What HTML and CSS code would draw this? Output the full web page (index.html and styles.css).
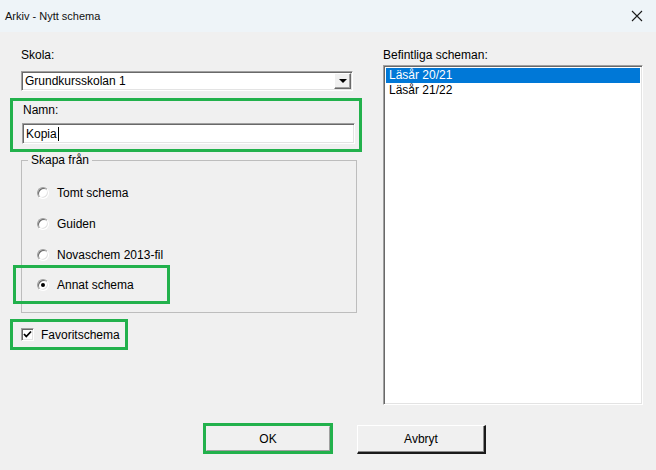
FILE: index.html
```html
<!DOCTYPE html>
<html lang="sv">
<head>
    <meta charset="UTF-8">
    <title>Arkiv - Nytt schema</title>
    <link rel="stylesheet" href="styles.css">
</head>
<body>
    <div class="titlebar">
        <span class="title">Arkiv - Nytt schema</span>
        <svg class="close" width="12" height="12" viewBox="0 0 12 12">
            <path d="M1 1 L11 11 M11 1 L1 11" stroke="#1a1a1a" stroke-width="1.1" fill="none"/>
        </svg>
    </div>

    <div class="content">
        <div class="columns">
            <div class="left">
                <div class="lbl">Skola:</div>
                <div class="combo">
                    <span class="combo-text">Grundkursskolan 1</span>
                    <span class="drop"><span class="arrow"></span></span>
                </div>

                <div class="mark mark-namn">
                    <div class="lbl namn-lbl">Namn:</div>
                    <div class="textbox">Kopia<span class="caret"></span></div>
                </div>

                <div class="group">
                    <div class="group-title">Skapa från</div>
                    <div class="radio first"><span class="circle"></span>Tomt schema</div>
                    <div class="radio"><span class="circle"></span>Guiden</div>
                    <div class="radio"><span class="circle"></span>Novaschem 2013-fil</div>
                    <div class="mark mark-radio"><span class="circle checked"></span>Annat schema</div>
                </div>

                <div class="mark mark-check">
                    <span class="checkbox">
                        <svg width="9" height="9" viewBox="0 0 9 9">
                            <path d="M1 4 L3.3 6.5 L8 1.5" stroke="#000" stroke-width="1.8" fill="none"/>
                        </svg>
                    </span>
                    Favoritschema
                </div>
            </div>

            <div class="right">
                <div class="lbl">Befintliga scheman:</div>
                <div class="listbox">
                    <div class="item selected">Läsår 20/21</div>
                    <div class="item">Läsår 21/22</div>
                </div>
            </div>
        </div>

        <div class="buttons">
            <div class="mark mark-ok"><button class="btn btn-ok">OK</button></div>
            <button class="btn btn-cancel">Avbryt</button>
        </div>
    </div>
</body>
</html>
```

FILE: styles.css
```css
body {
    margin: 0;
    background: #f0f0f0;
    font-family: "Liberation Sans", Arial, sans-serif;
    font-size: 12px;
    color: #000;
}
.titlebar {
    height: 32px;
    background: #eef4f8;
    display: flex;
    align-items: center;
    justify-content: space-between;
    padding: 0 13px 0 5px;
}
.title {
    font-size: 11px;
    color: #111;
}
.content {
    padding: 16px 0 0 21px;
}
.columns {
    display: flex;
    align-items: flex-start;
}
.left {
    width: 336px;
    display: flex;
    flex-direction: column;
}
.right {
    margin-left: 26px;
    width: 260px;
}
.lbl {
    line-height: 14px;
    height: 14px;
}

/* green highlight frames */
.mark {
    border: 3px solid #22b14c;
    box-sizing: border-box;
}

/* sunken fields */
.combo,
.textbox,
.listbox {
    box-sizing: border-box;
    background: #fff;
    border: 1px solid;
    border-color: #a0a0a0 #fff #fff #a0a0a0;
    box-shadow: inset 1px 1px 0 #696969, inset -1px -1px 0 #e3e3e3;
}
.combo {
    margin-top: 9px;
    width: 332px;
    height: 20px;
    display: flex;
    align-items: center;
    justify-content: space-between;
    padding: 0 1px 0 3px;
}
.drop {
    width: 17px;
    height: 16px;
    box-sizing: border-box;
    background: #f0f0f0;
    border: 1px solid;
    border-color: #fff #696969 #696969 #fff;
    box-shadow: inset -1px -1px 0 #a0a0a0;
    display: flex;
    align-items: center;
    justify-content: center;
}
.arrow {
    width: 0;
    height: 0;
    border-left: 4px solid transparent;
    border-right: 4px solid transparent;
    border-top: 4px solid #000;
}

.mark-namn {
    margin: 7px -5px 0 -11px;
    padding: 2px 4px 5px 9px;
}
.namn-lbl {
    padding-left: 1px;
}
.textbox {
    margin-top: 6px;
    height: 21px;
    display: flex;
    align-items: center;
    padding-left: 3px;
}
.caret {
    display: inline-block;
    width: 1px;
    height: 14px;
    background: #000;
    margin-left: 1px;
}

.group {
    margin-top: 8px;
    border: 1px solid #bdbdbd;
    padding-bottom: 8px;
}
.group-title {
    width: max-content;
    margin: -8px 0 0 6px;
    padding: 0 3px;
    background: #f0f0f0;
    line-height: 14px;
}
.radio {
    display: flex;
    align-items: center;
    gap: 8px;
    height: 31px;
    padding-left: 15px;
}
.radio.first {
    margin-top: 10px;
}
.circle {
    width: 12px;
    height: 12px;
    box-sizing: border-box;
    border-radius: 50%;
    background: #fff;
    border: 1px solid;
    border-color: #a0a0a0 #fff #fff #a0a0a0;
    box-shadow: inset 1px 1px 0 #696969, inset -1px -1px 0 #e3e3e3;
    display: flex;
    align-items: center;
    justify-content: center;
}
.circle.checked::after {
    content: "";
    width: 4px;
    height: 4px;
    border-radius: 50%;
    background: #000;
}
.mark-radio {
    margin: -5px 0 0 -9px;
    width: 157px;
    height: 39px;
    display: flex;
    align-items: center;
    gap: 8px;
    padding-left: 21px;
}

.mark-check {
    margin: 6px 0 0 -11px;
    width: 118px;
    height: 31px;
    display: flex;
    align-items: center;
    gap: 7px;
    padding-left: 8px;
}
.checkbox {
    width: 13px;
    height: 13px;
    box-sizing: border-box;
    background: #fff;
    border: 1px solid;
    border-color: #a0a0a0 #fff #fff #a0a0a0;
    box-shadow: inset 1px 1px 0 #696969, inset -1px -1px 0 #e3e3e3;
    display: flex;
    align-items: center;
    justify-content: center;
}

.listbox {
    margin-top: 3px;
    height: 340px;
    padding: 2px;
}
.item {
    height: 15px;
    line-height: 15px;
    padding-left: 3px;
}
.item.selected {
    background: #0078d7;
    color: #fff;
}

.buttons {
    display: flex;
    align-items: flex-end;
    gap: 24px;
    margin-top: 18px;
    padding-left: 182px;
}
.btn {
    font-family: "Liberation Sans", Arial, sans-serif;
    font-size: 12px;
    color: #000;
    background: #f0f0f0;
    box-sizing: border-box;
    border: 1px solid;
    border-color: #fff #1a1a1a #1a1a1a #fff;
    box-shadow: inset -1px -1px 0 #8a8a8a;
    padding: 0;
}
.mark-ok {
    width: 130px;
    height: 31px;
}
.btn-ok {
    display: block;
    width: 100%;
    height: 100%;
    border-color: #f0f0f0 #a0a0a0 #a0a0a0 #f0f0f0;
    box-shadow: none;
}
.btn-cancel {
    width: 129px;
    height: 29px;
    border-width: 1px 2px 2px 1px;
}
```
